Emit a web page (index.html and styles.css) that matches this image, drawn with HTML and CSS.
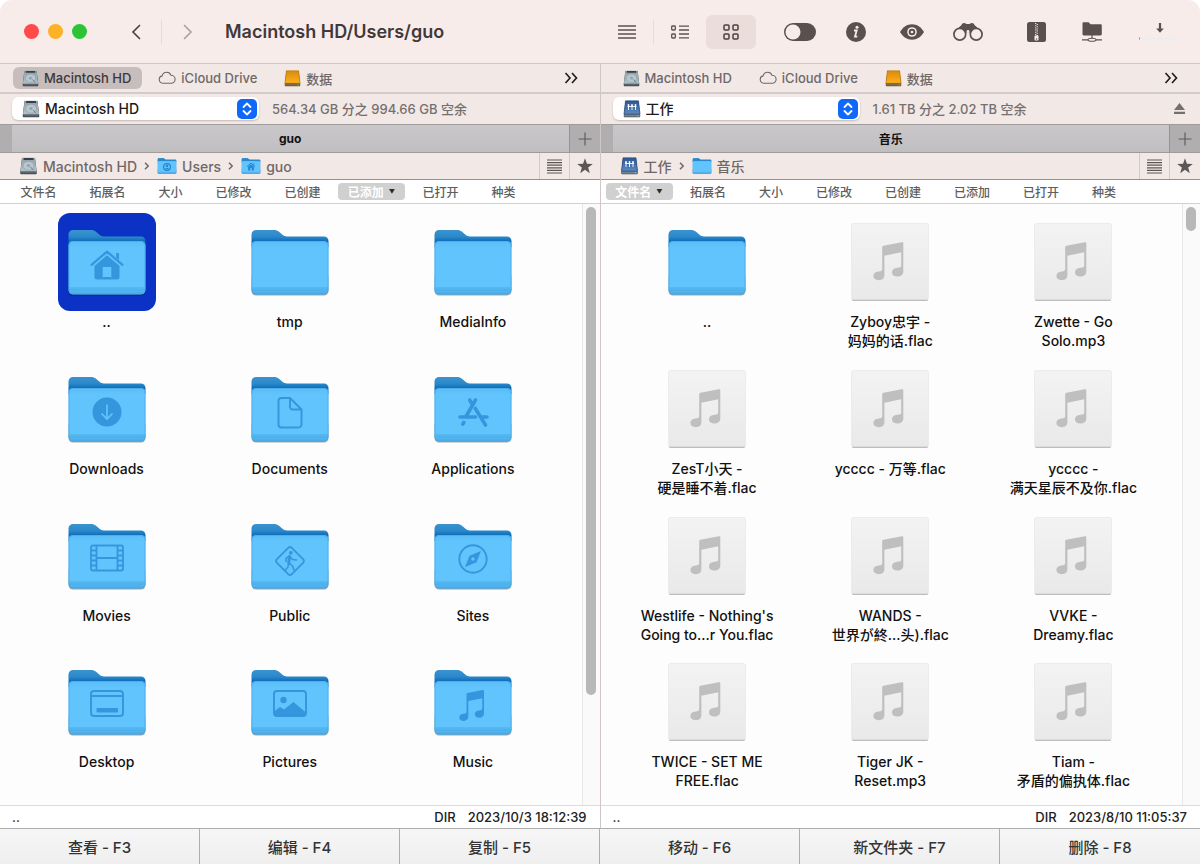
FILE: index.html
```html
<!DOCTYPE html>
<html lang="zh-CN">
<head>
    <meta charset="UTF-8">
    <meta name="viewport" content="width=device-width, initial-scale=1.0">
    <title>Macintosh HD/Users/guo</title>
    <link rel="stylesheet" href="styles.css">
</head>
<body>
    <svg class="sprite" aria-hidden="true">
        <defs>
            <linearGradient id="g-back" x1="0" y1="0" x2="0" y2="1">
                <stop offset="0" stop-color="#3a93cf"/>
                <stop offset="0.4" stop-color="#2a88ca"/>
                <stop offset="0.7" stop-color="#0a68b8"/>
            </linearGradient>
            <linearGradient id="g-front" x1="0" y1="0" x2="0" y2="1">
                <stop offset="0" stop-color="#5bbdf6"/>
                <stop offset="0.12" stop-color="#62c4fc"/>
                <stop offset="0.85" stop-color="#62c4fc"/>
                <stop offset="1" stop-color="#47aae6"/>
            </linearGradient>
            <linearGradient id="g-page" x1="0" y1="0" x2="0" y2="1">
                <stop offset="0" stop-color="#f3f3f3"/>
                <stop offset="1" stop-color="#e9e9e9"/>
            </linearGradient>
            <linearGradient id="g-disk" x1="0" y1="0" x2="0" y2="1">
                <stop offset="0" stop-color="#8fa0a8"/>
                <stop offset="1" stop-color="#b4c3ca"/>
            </linearGradient>
            <linearGradient id="g-orange" x1="0" y1="0" x2="0" y2="1">
                <stop offset="0" stop-color="#d98a0c"/>
                <stop offset="1" stop-color="#ffb01e"/>
            </linearGradient>
            <linearGradient id="g-net" x1="0" y1="0" x2="0" y2="1">
                <stop offset="0" stop-color="#2c5591"/>
                <stop offset="1" stop-color="#5b8ac4"/>
            </linearGradient>

            <symbol id="folder" viewBox="0 0 98 98">
                <rect x="10.5" y="60" width="77" height="22.5" rx="4.5" fill="#000" opacity="0.35"/>
                <path d="M10.5 32V21.5a4.500 4.500 0 0 1 4.500-4.500H33c2 0 3.500.500 5 1.800l3.500 3c1.400 1.200 2.500 1.700 4.500 1.700h37a4.500 4.500 0 0 1 4.500 4.500V34h-77z" fill="url(#g-back)"/>
                <rect x="10.500" y="28" width="77" height="53.500" rx="4.500" fill="url(#g-front)"/>
                <path d="M11 75h76M11 77h76" stroke="#3ba0de" stroke-width="0.700" opacity="0.700"/>
                <rect x="11" y="28.500" width="76" height="52.500" rx="4" fill="none" stroke="#46a8e6" opacity="0.700"/>
            </symbol>

            <symbol id="file" viewBox="0 0 98 98">
                <rect x="11" y="12" width="76" height="76" rx="1.500" fill="#000" opacity="0.250"/>
                <rect x="10.500" y="10.500" width="77" height="76.500" rx="1.500" fill="#dcdcdc"/>
                <rect x="11" y="11" width="76" height="75" rx="1" fill="url(#g-page)"/>
                <path fill="#bfbfbf" d="M41.200 34.200c0-.900.400-1.300 1.200-1.500l18.400-3.500c1-.200 1.500.200 1.500 1.100V58.500c0 3.300-2.500 5.100-5.800 5.100-3.400 0-5.500-1.600-5.500-4.100 0-3 2.500-4.500 5.500-4.700 2.800-.200 3.700-.700 3.700-2.600V39.200L43.400 42.700V62.300c0 3.200-2.500 4.900-5.600 4.900-3.300 0-5.400-1.600-5.400-4.100 0-2.900 2.400-4.400 5.300-4.600 2.600-.200 3.500-.700 3.500-2.400z"/>
            </symbol>

            <symbol id="disk" viewBox="0 0 18 18">
                <path d="M2.500 1h13l1.700 13.500v2a.8.8 0 0 1-.8.800H1.600a.8.8 0 0 1-.8-.8v-2z" fill="#39424a"/>
                <path d="M2.500.800h13L17 14.500H1z" fill="url(#g-disk)"/>
                <path d="M4.200 1h9.600l.300 2H4z" fill="#36404a"/>
                <ellipse cx="9" cy="8.700" rx="5.500" ry="4.500" fill="#b8c7ce" stroke="#8a9aa3" stroke-width=".600"/>
                <circle cx="9" cy="8.500" r="1.600" fill="#93a3ab"/>
                <path d="M11 10l3.200 3.500" stroke="#6c7c86" stroke-width="1"/>
                <path d="M1.500 14.700h15v1.800h-15z" fill="#59646c"/>
            </symbol>
            <symbol id="disk-orange" viewBox="0 0 18 18">
                <path d="M2.500 1h13l1.700 13.500v2a.8.8 0 0 1-.8.800H1.600a.8.8 0 0 1-.8-.8v-2z" fill="#6b4b1a"/>
                <path d="M2.500.800h13L17 14H1z" fill="url(#g-orange)" stroke="#b87407" stroke-width=".600"/>
                <path d="M1.200 14.500h15.600v2.200H1.200z" fill="#7b6a4a"/>
                <circle cx="15" cy="15.700" r=".600" fill="#7be05a"/>
            </symbol>
            <symbol id="disk-net" viewBox="0 0 18 18">
                <path d="M2.500 1h13l1.700 13.500v2a.8.8 0 0 1-.8.800H1.600a.8.8 0 0 1-.8-.8v-2z" fill="#3a4652"/>
                <path d="M2.500.800h13L17 14H1z" fill="url(#g-net)" stroke="#284a7d" stroke-width=".600"/>
                <path d="M5.500 5v5M9 5v5M12.500 5v5M4.500 6.500h9" stroke="#fff" stroke-width=".900"/>
                <g fill="#fff"><circle cx="5.500" cy="5" r=".900"/><circle cx="9" cy="5" r=".900"/><circle cx="12.500" cy="5" r=".900"/></g>
                <path d="M1.200 14.500h15.600v2.200H1.200z" fill="#74828f"/>
                <circle cx="15" cy="15.700" r=".600" fill="#7be05a"/>
            </symbol>
            <symbol id="cloud" viewBox="0 0 18 14">
                <path d="M4.700 12.200a3.700 3.700 0 0 1-.6-7.300C4.700 2.700 6.500 1.300 8.700 1.300c2 0 3.700 1.200 4.300 3 2.300 0 4.100 1.700 4.100 3.900s-1.800 4-4 4z" fill="none" stroke="currentColor" stroke-width="1.100"/>
            </symbol>
            <symbol id="lines" viewBox="0 0 18 14">
                <path d="M0 1h18M0 5h18M0 9h18M0 13h18" stroke="currentColor" stroke-width="1.300"/>
            </symbol>
            <symbol id="lines-dense" viewBox="0 0 15 15">
                <path d="M0 1h15M0 3.600h15M0 6.200h15M0 8.800h15M0 11.400h15M0 14h15" stroke="currentColor" stroke-width="1.200"/>
            </symbol>
            <symbol id="star" viewBox="0 0 16 16">
                <path fill="currentColor" d="M8 .300l1.950 5.550 5.850.150-4.650 3.550 1.650 5.650L8 11.850 3.200 15.200l1.650-5.650L.200 6l5.850-.150z"/>
            </symbol>
            <symbol id="plus" viewBox="0 0 14 14">
                <path d="M7 .500v13M.500 7h13" stroke="currentColor" stroke-width="1.200"/>
            </symbol>
            <symbol id="more" viewBox="0 0 14 12">
                <path d="M1.500 1l4.500 5-4.500 5M8 1l4.500 5L8 11" fill="none" stroke="currentColor" stroke-width="1.600"/>
            </symbol>
            <symbol id="crumb" viewBox="0 0 6 8">
                <path d="M1 .800L4.200 4 1 7.200" fill="none" stroke="currentColor" stroke-width="1.500"/>
            </symbol>
            <symbol id="updown" viewBox="0 0 20 20">
                <rect width="20" height="20" rx="5" fill="#1068fb"/>
                <path d="M6.500 8L10 4.500 13.500 8M6.500 12l3.500 3.500 3.500-3.500" fill="none" stroke="#fff" stroke-width="1.800" stroke-linecap="round" stroke-linejoin="round"/>
            </symbol>
        </defs>
    </svg>

    <div class="window">
        <header class="toolbar">
            <div class="lights">
                <button class="light red" aria-label="关闭"></button>
                <button class="light yellow" aria-label="最小化"></button>
                <button class="light green" aria-label="缩放"></button>
            </div>
            <nav class="history">
                <button aria-label="后退"><svg width="10" height="16" viewBox="0 0 10 16"><path d="M8.500 1.500L2 8l6.500 6.500" fill="none" stroke="#4b4543" stroke-width="1.700" stroke-linecap="round"/></svg></button>
                <span class="divider"></span>
                <button aria-label="前进"><svg width="10" height="16" viewBox="0 0 10 16"><path d="M1.500 1.500L8 8l-6.500 6.500" fill="none" stroke="#aca3a1" stroke-width="1.700" stroke-linecap="round"/></svg></button>
            </nav>
            <h1>Macintosh HD/Users/guo</h1>

            <div class="views">
                <button aria-label="简略"><svg width="18" height="14"><use href="#lines"/></svg></button>
                <span class="divider"></span>
                <button aria-label="列表"><svg width="18" height="14" viewBox="0 0 18 14"><path d="M8 1.200h10M8 5h10M8 9h10M8 12.800h10" stroke="currentColor" stroke-width="1.300"/><rect x=".700" y="1" width="3.600" height="4" rx=".800" fill="none" stroke="currentColor" stroke-width="1.300"/><rect x=".700" y="9" width="3.600" height="4" rx=".800" fill="none" stroke="currentColor" stroke-width="1.300"/></svg></button>
                <button class="active" aria-label="图标"><svg width="16" height="16" viewBox="0 0 16 16"><g fill="none" stroke="currentColor" stroke-width="1.500"><rect x="1" y="1" width="5" height="5" rx="1"/><rect x="10" y="1" width="5" height="5" rx="1"/><rect x="1" y="10" width="5" height="5" rx="1"/><rect x="10" y="10" width="5" height="5" rx="1"/></g></svg></button>
            </div>
            <div class="tools">
                <button aria-label="切换"><svg width="32" height="18" viewBox="0 0 32 18"><rect width="32" height="18" rx="9" fill="currentColor"/><circle cx="9" cy="9" r="7.500" fill="#f8ecea"/></svg></button>
                <button aria-label="信息"><svg width="20" height="20" viewBox="0 0 20 20"><circle cx="10" cy="10" r="10" fill="currentColor"/><circle cx="11" cy="5.300" r="1.500" fill="#f8ecea"/><path d="M8 8.500h2.700L9 14.600h2.300" fill="none" stroke="#f8ecea" stroke-width="1.800"/></svg></button>
                <button aria-label="查看"><svg width="24" height="16" viewBox="0 0 24 16"><path d="M0 8C3 3 7 .300 12 .300S21 3 24 8c-3 5-7 7.700-12 7.700S3 13 0 8z" fill="currentColor"/><circle cx="12" cy="8" r="4.800" fill="#f8ecea"/><circle cx="12" cy="8" r="3.300" fill="currentColor"/><circle cx="12" cy="8" r="1.300" fill="#f8ecea"/></svg></button>
                <button aria-label="搜索"><svg width="30" height="19" viewBox="0 0 30 19"><path d="M1.500 9.500L8.500 3C9 .500 12 .300 13.300 2h3.400C18 .300 21 .500 21.500 3l7 6.500L20 15l-3-4.500h-4L10 15z" fill="currentColor"/><circle cx="6.800" cy="12.200" r="5.900" fill="#f8ecea" stroke="currentColor" stroke-width="1.700"/><circle cx="23.200" cy="12.200" r="5.900" fill="#f8ecea" stroke="currentColor" stroke-width="1.700"/><circle cx="15" cy="9.500" r="1.400" fill="#f8ecea"/></svg></button>
            </div>
            <div class="tools">
                <button aria-label="压缩"><svg width="19" height="20" viewBox="0 0 19 20"><rect width="19" height="20" rx="2.500" fill="currentColor"/><path d="M8.700 1v13M10.300 2v12" stroke="#f8ecea" stroke-width="1.200" stroke-dasharray="1 1.200"/><rect x="7.500" y="13.500" width="4" height="5" rx="1" fill="#f8ecea"/><circle cx="9.500" cy="17" r=".700" fill="currentColor"/></svg></button>
                <button aria-label="网络"><svg width="20" height="20" viewBox="0 0 20 20"><path d="M.500 1.500c0-.800.400-1.200 1.200-1.200h5l1.800 2h10c.800 0 1.300.500 1.300 1.300V12c0 .900-.500 1.400-1.300 1.400H1.700c-.8 0-1.200-.5-1.200-1.400z" fill="currentColor"/><path d="M10 13v4M0 17.800h20" stroke="currentColor" stroke-width="1.200"/><ellipse cx="10" cy="17.800" rx="4" ry="1.500" fill="#f8ecea" stroke="currentColor" stroke-width="1.100"/></svg></button>
            </div>
            <button class="queue" aria-label="队列">
                <svg width="42" height="18" viewBox="0 0 42 18"><path d="M19.900 0h2.200v5.500h2.700L21 9.700l-3.800-4.200h2.700z" fill="currentColor"/><path d="M0 15.500h41" stroke="#e6f0f3" stroke-width="2"/><path d="M0 15.500h1" stroke="#5b9cf8" stroke-width="2"/></svg>
            </button>
        </header>

        <main class="panes">
            <section class="pane">
                <nav class="favorites">
                    <button class="active"><svg width="17" height="17"><use href="#disk"/></svg>Macintosh HD</button>
                    <button><svg width="18" height="14"><use href="#cloud"/></svg>iCloud Drive</button>
                    <button><svg width="17" height="17"><use href="#disk-orange"/></svg>数据</button>
                    <button class="more" aria-label="更多"><svg width="14" height="12"><use href="#more"/></svg></button>
                </nav>
                <div class="drive">
                    <label class="picker">
                        <svg width="18" height="18"><use href="#disk"/></svg>
                        <select aria-label="磁盘"><option>Macintosh HD</option></select>
                        <svg width="20" height="20"><use href="#updown"/></svg>
                    </label>
                    <span>564.34 GB 分之 994.66 GB 空余</span>
                </div>
                <div class="tabs">
                    <button class="tab">guo</button>
                    <button class="add" aria-label="新标签"><svg width="14" height="14"><use href="#plus"/></svg></button>
                </div>
                <div class="path">
                    <a href="#"><svg width="19" height="18"><use href="#disk"/></svg>Macintosh HD</a>
                    <svg class="crumb" width="6" height="8"><use href="#crumb"/></svg>
                    <a href="#"><svg width="20" height="18" viewBox="8 13 82 74"><use href="#folder" width="98" height="98"/><circle cx="49" cy="54" r="14" fill="none" stroke="#2487d0" stroke-width="5"/><circle cx="49" cy="50" r="5" fill="#2487d0"/><path d="M40 63c2-7 16-7 18 0z" fill="#2487d0"/></svg>Users</a>
                    <svg class="crumb" width="6" height="8"><use href="#crumb"/></svg>
                    <a href="#"><svg width="20" height="18" viewBox="8 13 82 74"><use href="#folder" width="98" height="98"/><path d="M32 53l17-15 17 15M60 40v8" fill="none" stroke="#2487d0" stroke-width="4"/><path d="M37 53l12-10 12 10v15h-9V57h-6v11h-9z" fill="#2487d0"/></svg>guo</a>
                    <button aria-label="历史"><svg width="15" height="15"><use href="#lines-dense"/></svg></button>
                    <button aria-label="收藏"><svg width="16" height="16"><use href="#star"/></svg></button>
                </div>
                <div class="sort">
                    <button>文件名</button>
                    <button>拓展名</button>
                    <button class="short">大小</button>
                    <button>已修改</button>
                    <button>已创建</button>
                    <button class="active">已添加<span>▼</span></button>
                    <button>已打开</button>
                    <button class="short">种类</button>
                </div>
                <div class="content">
                    <ul class="files">
                        <li><button class="selected">
                            <svg viewBox="0 0 98 98"><use href="#folder"/><g fill="#3497de"><path d="M33.500 51.800L49 38.600l15.500 13.200" fill="none" stroke="#3497de" stroke-width="2.200" stroke-linecap="round" stroke-linejoin="round"/><path d="M58.200 40h2.800v7l-2.800-2.300z"/><path d="M36.500 53L49 42.300 61.500 53v11c0 1.700-.8 2.500-2.500 2.500h-5.700V54h-8.600v12.500H39c-1.700 0-2.500-.8-2.500-2.500z"/><path d="M44.700 64h8.600v2.500h-8.600z"/></g></svg>
                            <span>..</span></button></li>
                        <li><button>
                            <svg viewBox="0 0 98 98"><use href="#folder"/></svg>
                            <span>tmp</span></button></li>
                        <li><button>
                            <svg viewBox="0 0 98 98"><use href="#folder"/></svg>
                            <span>MediaInfo</span></button></li>
                        <li><button>
                            <svg viewBox="0 0 98 98"><use href="#folder"/><circle cx="49" cy="52" r="14.500" fill="#3497de"/><path d="M49 44.500v14.500M43.500 53.500l5.500 5.500 5.500-5.500" fill="none" stroke="#62c4fc" stroke-width="1.700"/></svg>
                            <span>Downloads</span></button></li>
                        <li><button>
                            <svg viewBox="0 0 98 98"><use href="#folder"/><path d="M40.500 38h8.500L60.500 49.500V64.500a3 3 0 0 1-3 3h-17a3 3 0 0 1-3-3V41a3 3 0 0 1 3-3zM49 38v9a2.500 2.500 0 0 0 2.500 2.500h9" fill="none" stroke="#3497de" stroke-width="1.900"/></svg>
                            <span>Documents</span></button></li>
                        <li><button>
                            <svg viewBox="0 0 98 98"><use href="#folder"/><g fill="none" stroke="#3497de" stroke-width="3.600" stroke-linecap="round"><path d="M51.500 40L42 56.500M45.700 40l1.600 3M51.300 48.500L61.500 65M36 57h15.500M56.500 57h6.500M39.800 62.500l-1 1.600"/></g></svg>
                            <span>Applications</span></button></li>
                        <li><button>
                            <svg viewBox="0 0 98 98"><use href="#folder"/><g fill="none" stroke="#3497de" stroke-width="1.800"><rect x="33" y="38.500" width="32" height="25" rx="2"/><path d="M38.500 38.500v25M59.500 38.500v25M38.500 51h21M33 43.500h5.500M33 48.500h5.500M33 53.500h5.500M33 58.500h5.500M59.500 43.500H65M59.500 48.500H65M59.500 53.500H65M59.500 58.500H65"/></g></svg>
                            <span>Movies</span></button></li>
                        <li><button>
                            <svg viewBox="0 0 98 98"><use href="#folder"/><rect x="38.500" y="43.500" width="21" height="21" rx="2.500" transform="rotate(45 49 54)" fill="none" stroke="#3497de" stroke-width="1.800"/><circle cx="49.800" cy="45.800" r="1.900" fill="#3497de"/><path d="M49 49.500l2.500 3 4 .500M47.500 49.500L45 51.500v3M48 56l3.500 3 1.500 4M47.500 56.500L47 60l-3 3.500" fill="none" stroke="#3497de" stroke-width="1.600" stroke-linecap="round"/><path d="M48.500 49.500l-.7 6.500" stroke="#3497de" stroke-width="3" stroke-linecap="round"/></svg>
                            <span>Public</span></button></li>
                        <li><button>
                            <svg viewBox="0 0 98 98"><use href="#folder"/><circle cx="49" cy="52" r="13.700" fill="none" stroke="#3497de" stroke-width="1.900"/><path d="M57 44l-4.500 11.300L41 60l4.500-11.300z" fill="#3497de"/><circle cx="49" cy="52" r="1.700" fill="#62c4fc"/></svg>
                            <span>Sites</span></button></li>
                        <li><button>
                            <svg viewBox="0 0 98 98"><use href="#folder"/><rect x="33" y="38" width="32" height="25" rx="3" fill="none" stroke="#3497de" stroke-width="1.900"/><path d="M33 43h32" stroke="#3497de" stroke-width="1.900"/><rect x="38.500" y="55" width="21.500" height="4.500" rx="1" fill="#3497de"/></svg>
                            <span>Desktop</span></button></li>
                        <li><button>
                            <svg viewBox="0 0 98 98"><use href="#folder"/><rect x="33" y="38" width="32" height="25" rx="3" fill="none" stroke="#3497de" stroke-width="1.900"/><circle cx="42.500" cy="47" r="3.200" fill="#3497de"/><path d="M33 58.500l6-4.500 4 2.500 9.500-7.500L65 59.500V61a2 2 0 0 1-2 2H35a2 2 0 0 1-2-2z" fill="#3497de"/></svg>
                            <span>Pictures</span></button></li>
                        <li><button>
                            <svg viewBox="0 0 98 98"><use href="#folder"/><path fill="#3497de" d="M42.500 41.300c0-.8.300-1.200 1-1.300l15.200-2.900c.900-.2 1.300.2 1.300.9V60.500c0 2.600-2 4.200-4.700 4.200s-4.500-1.300-4.500-3.400c0-2.400 2-3.700 4.500-3.900 2.300-.2 3-.5 3-2.100V45.300L44.300 48V63.800c0 2.600-2 4.100-4.600 4.100-2.700 0-4.400-1.300-4.400-3.400 0-2.400 2-3.600 4.300-3.800 2.200-.2 2.900-.6 2.900-2z"/></svg>
                            <span>Music</span></button></li>
                    </ul>
                    <div class="scrollbar"><div class="thumb"></div></div>
                </div>
                <div class="status"><span>..</span><span>DIR</span><span>2023/10/3 18:12:39</span></div>
            </section>

            <section class="pane">
                <nav class="favorites">
                    <button><svg width="17" height="17"><use href="#disk"/></svg>Macintosh HD</button>
                    <button><svg width="18" height="14"><use href="#cloud"/></svg>iCloud Drive</button>
                    <button><svg width="17" height="17"><use href="#disk-orange"/></svg>数据</button>
                    <button class="more" aria-label="更多"><svg width="14" height="12"><use href="#more"/></svg></button>
                </nav>
                <div class="drive">
                    <label class="picker">
                        <svg width="18" height="18"><use href="#disk-net"/></svg>
                        <select aria-label="磁盘"><option>工作</option></select>
                        <svg width="20" height="20"><use href="#updown"/></svg>
                    </label>
                    <span>1.61 TB 分之 2.02 TB 空余</span>
                    <button class="eject" aria-label="推出"><svg width="11" height="11" viewBox="0 0 11 11"><path d="M5.500 0L11 7H0zM0 8.800h11V11H0z" fill="currentColor"/></svg></button>
                </div>
                <div class="tabs">
                    <button class="tab">音乐</button>
                    <button class="add" aria-label="新标签"><svg width="14" height="14"><use href="#plus"/></svg></button>
                </div>
                <div class="path">
                    <a href="#"><svg width="19" height="18"><use href="#disk-net"/></svg>工作</a>
                    <svg class="crumb" width="6" height="8"><use href="#crumb"/></svg>
                    <a href="#"><svg width="20" height="18" viewBox="8 13 82 74"><use href="#folder" width="98" height="98"/></svg>音乐</a>
                    <button aria-label="历史"><svg width="15" height="15"><use href="#lines-dense"/></svg></button>
                    <button aria-label="收藏"><svg width="16" height="16"><use href="#star"/></svg></button>
                </div>
                <div class="sort">
                    <button class="active">文件名<span>▼</span></button>
                    <button>拓展名</button>
                    <button class="short">大小</button>
                    <button>已修改</button>
                    <button>已创建</button>
                    <button>已添加</button>
                    <button>已打开</button>
                    <button class="short">种类</button>
                </div>
                <div class="content">
                    <ul class="files">
                        <li><button><svg><use href="#folder"/></svg><span>..</span></button></li>
                        <li><button><svg><use href="#file"/></svg><span>Zyboy忠宇 -<br>妈妈的话.flac</span></button></li>
                        <li><button><svg><use href="#file"/></svg><span>Zwette - Go<br>Solo.mp3</span></button></li>
                        <li><button><svg><use href="#file"/></svg><span>ZesT小天 -<br>硬是睡不着.flac</span></button></li>
                        <li><button><svg><use href="#file"/></svg><span>ycccc - 万等.flac</span></button></li>
                        <li><button><svg><use href="#file"/></svg><span>ycccc -<br>满天星辰不及你.flac</span></button></li>
                        <li><button><svg><use href="#file"/></svg><span>Westlife - Nothing's<br>Going to...r You.flac</span></button></li>
                        <li><button><svg><use href="#file"/></svg><span>WANDS -<br>世界が終...头).flac</span></button></li>
                        <li><button><svg><use href="#file"/></svg><span>VVKE -<br>Dreamy.flac</span></button></li>
                        <li><button><svg><use href="#file"/></svg><span>TWICE - SET ME<br>FREE.flac</span></button></li>
                        <li><button><svg><use href="#file"/></svg><span>Tiger JK -<br>Reset.mp3</span></button></li>
                        <li><button><svg><use href="#file"/></svg><span>Tiam -<br>矛盾的偏执体.flac</span></button></li>
                    </ul>
                    <div class="scrollbar"><div class="thumb small"></div></div>
                </div>
                <div class="status"><span>..</span><span>DIR</span><span>2023/8/10 11:05:37</span></div>
            </section>
        </main>

        <footer class="actions">
            <button>查看 - F3</button>
            <button>编辑 - F4</button>
            <button>复制 - F5</button>
            <button>移动 - F6</button>
            <button>新文件夹 - F7</button>
            <button>删除 - F8</button>
        </footer>
    </div>
</body>
</html>
```
FILE: styles.css
```css
* {
    margin: 0;
    padding: 0;
    box-sizing: border-box;
}

body {
    font-family: Inter, "Noto Sans CJK SC", sans-serif;
    font-size: 14px;
    font-weight: 500;
    color: #111;
    background: #fff;
}

button {
    font: inherit;
    color: inherit;
    background: none;
    border: none;
    display: flex;
    align-items: center;
    justify-content: center;
}

svg {
    display: block;
    flex: none;
}

.sprite {
    position: absolute;
    width: 0;
    height: 0;
}

.window {
    display: flex;
    flex-direction: column;
    min-height: 100vh;
    border-radius: 12px 12px 0 0;
    overflow: hidden;
    background: #fdfdfd;
}

/* title bar */
.toolbar {
    display: flex;
    align-items: center;
    height: 64px;
    padding: 0 12px 0 24px;
    gap: 12px;
    background: #f8ecea;
    border-bottom: 1px solid #cfc6c5;
    color: #5a504e;
}

.lights {
    display: flex;
    gap: 9px;
}

.light {
    width: 15px;
    height: 15px;
    border-radius: 50%;
}

.red { background: #fe4a4a; }
.yellow { background: #fdb124; }
.green { background: #2bc437; }

.history {
    display: flex;
    align-items: center;
    margin-left: 11px;
}

.history button {
    width: 51px;
    height: 32px;
}

.divider {
    width: 1px;
    height: 24px;
    background: #e6dbd9;
}

h1 {
    flex: 1;
    font-size: 18px;
    font-weight: 600;
    color: #3f3a39;
    white-space: nowrap;
}

.views {
    display: flex;
    align-items: center;
    gap: 1px;
    margin-right: 4px;
}

.views button {
    width: 50px;
    height: 34px;
    border-radius: 6px;
}

.views .active {
    background: #eaddda;
    color: #4a4240;
}

.tools {
    display: flex;
}

.tools button,
.queue {
    width: 56px;
    height: 34px;
}

/* panes */
.panes {
    flex: 1;
    display: flex;
}

.pane {
    flex: 1 1 0;
    min-width: 0;
    display: flex;
    flex-direction: column;
}

.pane + .pane {
    border-left: 1px solid #cfc7c7;
}

.favorites {
    display: flex;
    align-items: center;
    height: 30px;
    padding: 0 13px;
    gap: 7px;
    background: #f2e8e6;
    border-bottom: 2px solid #d3cbcb;
    font-size: 13px;
    color: #6f6867;
}

.favorites button {
    height: 22px;
    padding: 0 11px 0 9px;
    gap: 5px;
    border-radius: 6px;
}

.favorites .active {
    background: #c7bdbc;
    color: #3d3837;
}

.favorites .more {
    margin-left: auto;
    padding: 0 9px;
    color: #1c1a1a;
}

.drive {
    display: flex;
    align-items: center;
    height: 30px;
    padding: 0 15px 1px 12px;
    gap: 13px;
    background: #f2e8e6;
    font-size: 13px;
    color: #757070;
}

.picker {
    display: flex;
    align-items: center;
    width: 247px;
    height: 23px;
    padding: 0 2px 0 10px;
    gap: 5px;
    background: #fff;
    border-radius: 6px;
    box-shadow: 0 1px 2px rgba(0, 0, 0, 0.2);
}

.picker select {
    flex: 1;
    appearance: none;
    border: none;
    background: none;
    font: inherit;
    font-size: 14px;
    color: #1c1a1a;
}

.eject {
    margin-left: auto;
}

.tabs {
    display: flex;
    height: 29px;
    padding-left: 12px;
    background: #b1aeb0;
    border-top: 1px solid #a09c9c;
    border-bottom: 1px solid #a09c9c;
}

.tab {
    flex: 1;
    background: linear-gradient(#cac7cb, #c0bfc0);
    font-size: 12px;
    font-weight: 700;
}

.add {
    width: 31px;
    border-left: 1px solid #949292;
    color: #5f5d5d;
}

.path {
    display: flex;
    align-items: stretch;
    height: 27px;
    padding-left: 19px;
    background: #f2e8e6;
    border-bottom: 1px solid #979090;
    color: #6f6867;
}

.path a {
    display: flex;
    align-items: center;
    gap: 5px;
    color: inherit;
    text-decoration: none;
}

.crumb {
    align-self: center;
    margin: 0 7px;
}

.path button {
    width: 30px;
    border-left: 1px solid #d3cbcb;
    color: #5c5756;
}

.path button:last-child {
    width: 31px;
}

.path a:last-of-type {
    margin-right: auto;
}

.sort {
    display: flex;
    align-items: center;
    height: 24px;
    padding: 0 5px 1px;
    gap: 2px;
    border-bottom: 1px solid #d0d0d0;
    background: #fff;
    font-size: 12px;
    color: #5e5e5e;
}

.sort button {
    width: 67px;
    height: 17px;
    border-radius: 4px;
}

.sort .short {
    width: 55px;
}

.sort .active {
    gap: 5px;
    background: #d0d0d0;
    color: #fff;
    font-weight: 700;
}

.sort span {
    font-size: 6px;
    color: #2a2a2a;
}

/* icon grid */
.content {
    flex: 1;
    display: flex;
}

.files {
    flex: 1;
    display: grid;
    grid-template-columns: repeat(3, 1fr);
    grid-template-rows: repeat(4, 1fr);
    padding: 9px 17px 5px 15px;
    list-style: none;
}

.files button {
    width: 100%;
    flex-direction: column;
    gap: 1px;
    line-height: 19px;
}

.files svg {
    width: 98px;
    height: 98px;
    border-radius: 12px;
}

.files span {
    white-space: nowrap;
}

.files .selected svg {
    background: #0b32c4;
}

.scrollbar {
    width: 18px;
    padding: 3px;
    background: #fafafa;
    border-left: 1px solid #e8e8e8;
}

.thumb {
    width: 10px;
    height: 82%;
    border-radius: 5px;
    background: #b8b8b8;
}

.thumb.small {
    height: 4%;
}

.status {
    display: flex;
    align-items: center;
    height: 23px;
    padding: 0 13px 0 12px;
    gap: 12px;
    border-top: 1px solid #dcdcdc;
    background: #fff;
    font-size: 13px;
    color: #222;
}

.status span:first-child {
    margin-right: auto;
}

/* function keys */
.actions {
    display: grid;
    grid-template-columns: repeat(6, 1fr);
    height: 36px;
    background: linear-gradient(#f6f6f6, #efefef);
    border-top: 1px solid #adadad;
    font-size: 15px;
    color: #333;
}

.actions button {
    border-right: 1px solid #adadad;
}

.actions button:last-child {
    border-right: none;
}
```
